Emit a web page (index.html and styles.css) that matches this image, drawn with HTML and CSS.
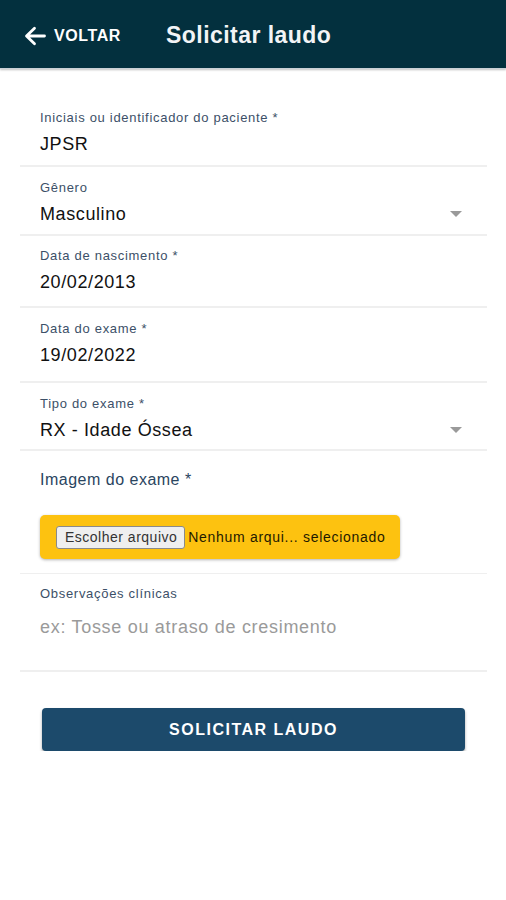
FILE: index.html
```html
<!DOCTYPE html>
<html lang="pt">
<head>
<meta charset="utf-8">
<title>Solicitar laudo</title>
<link rel="stylesheet" href="styles.css">
</head>
<body>
<header class="topbar">
  <a class="back" href="#">
    <svg class="back-icon" viewBox="0 0 22 20" width="22" height="20"><path d="M20.5 10H3M10.5 2.2L2.5 10l8 7.8" fill="none" stroke="#fff" stroke-width="2.8" stroke-linecap="round" stroke-linejoin="round"/></svg>
    <span>VOLTAR</span>
  </a>
  <h1 class="title">Solicitar laudo</h1>
</header>
<main class="form">
  <div class="field first">
    <div class="label">Iniciais ou identificador do paciente *</div>
    <div class="value">JPSR</div>
  </div>
  <div class="field select gender">
    <div class="label">Gênero</div>
    <div class="value">Masculino</div>
    <span class="caret"></span>
  </div>
  <div class="field birth">
    <div class="label">Data de nascimento *</div>
    <div class="value">20/02/2013</div>
  </div>
  <div class="field exam-date">
    <div class="label">Data do exame *</div>
    <div class="value">19/02/2022</div>
  </div>
  <div class="field select exam-type">
    <div class="label">Tipo do exame *</div>
    <div class="value">RX - Idade Óssea</div>
    <span class="caret"></span>
  </div>
  <div class="field upload">
    <div class="upload-label">Imagem do exame *</div>
    <div class="filebox">
      <button class="filebtn" type="button">Escolher arquivo</button>
      <span class="filename">Nenhum arqui... selecionado</span>
    </div>
  </div>
  <div class="field notes">
    <div class="label">Observações clínicas</div>
    <div class="placeholder">ex: Tosse ou atraso de cresimento</div>
  </div>
  <button class="submit" type="button">SOLICITAR LAUDO</button>
</main>
</body>
</html>
```
FILE: styles.css
```css
* { box-sizing: border-box; }
html, body { margin: 0; padding: 0; background: #fff; }
body { font-family: "Liberation Sans", Arial, sans-serif; color: #111; }

.topbar {
  height: 69px;
  background: #03303e;
  display: flex;
  align-items: center;
  padding: 3px 0 0 24px;
  box-shadow: 0 1px 2px rgba(0,0,0,0.25);
  border-bottom: 1px solid #c9d0d6;
}
.back {
  display: flex;
  align-items: center;
  gap: 8px;
  color: #fff;
  text-decoration: none;
  font-weight: bold;
  font-size: 16px;
  letter-spacing: 0.6px;
}
.back-icon { display: block; }
.title {
  margin: 0 0 0 45px;
  color: #f2f4f6;
  font-size: 23px;
  font-weight: bold;
  letter-spacing: 0.45px;
}

.form {
  padding: 0 19px 0 20px;
  display: flex;
  flex-direction: column;
}
.field {
  position: relative;
  border-bottom: 2px solid #efefef;
  padding: 0 20px;
}
.field.first { padding-top: 41px; height: 98px; }
.field.gender { height: 69px; padding-top: 13px; }
.field.birth { height: 72px; padding-top: 12px; }
.field.exam-date { height: 75px; padding-top: 13px; }
.field.exam-type { height: 68px; padding-top: 13px; }
.label {
  font-size: 13px;
  color: #3c5068;
  line-height: 16px;
  letter-spacing: 0.7px;
}
.value {
  font-size: 18px;
  line-height: 22px;
  margin-top: 7px;
  color: #111;
  letter-spacing: 0.6px;
}
.caret {
  position: absolute;
  right: 25px;
  top: 44px;
  width: 0;
  height: 0;
  border-left: 6px solid transparent;
  border-right: 6px solid transparent;
  border-top: 6px solid #9a9a9a;
}

.upload { height: 123px; padding-top: 20px; border-bottom-width: 1px; }
.upload-label { font-size: 16px; color: #2a4560; line-height: 18px; letter-spacing: 0.5px; }
.filebox {
  margin-top: 26px;
  width: 360px;
  height: 44px;
  background: #fdc210;
  border-radius: 5px;
  box-shadow: 0 1px 3px rgba(0,0,0,0.3);
  display: flex;
  align-items: center;
  padding-left: 16px;
}
.filebtn {
  font-family: "Liberation Sans", Arial, sans-serif;
  font-size: 14px;
  letter-spacing: 0.5px;
  color: #333;
  background: #efefef;
  border: 1px solid #8a8a8a;
  border-radius: 3px;
  height: 23px;
  padding: 0 7px 0 8px;
}
.filename { font-size: 14px; letter-spacing: 0.7px; color: #1f1a00; margin-left: 3px; }

.notes { height: 98px; padding-top: 12px; }
.placeholder {
  font-size: 18px;
  color: #9a9a9a;
  margin-top: 15px;
  letter-spacing: 0.7px;
}

.submit {
  margin: 36px 22px 0 22px;
  height: 43px;
  background: #1c4a6b;
  color: #fff;
  border: none;
  border-radius: 4px;
  box-shadow: 0 2px 3px rgba(0,0,0,0.35);
  font-family: "Liberation Sans", Arial, sans-serif;
  font-weight: bold;
  font-size: 16px;
  letter-spacing: 1.5px;
}
```
